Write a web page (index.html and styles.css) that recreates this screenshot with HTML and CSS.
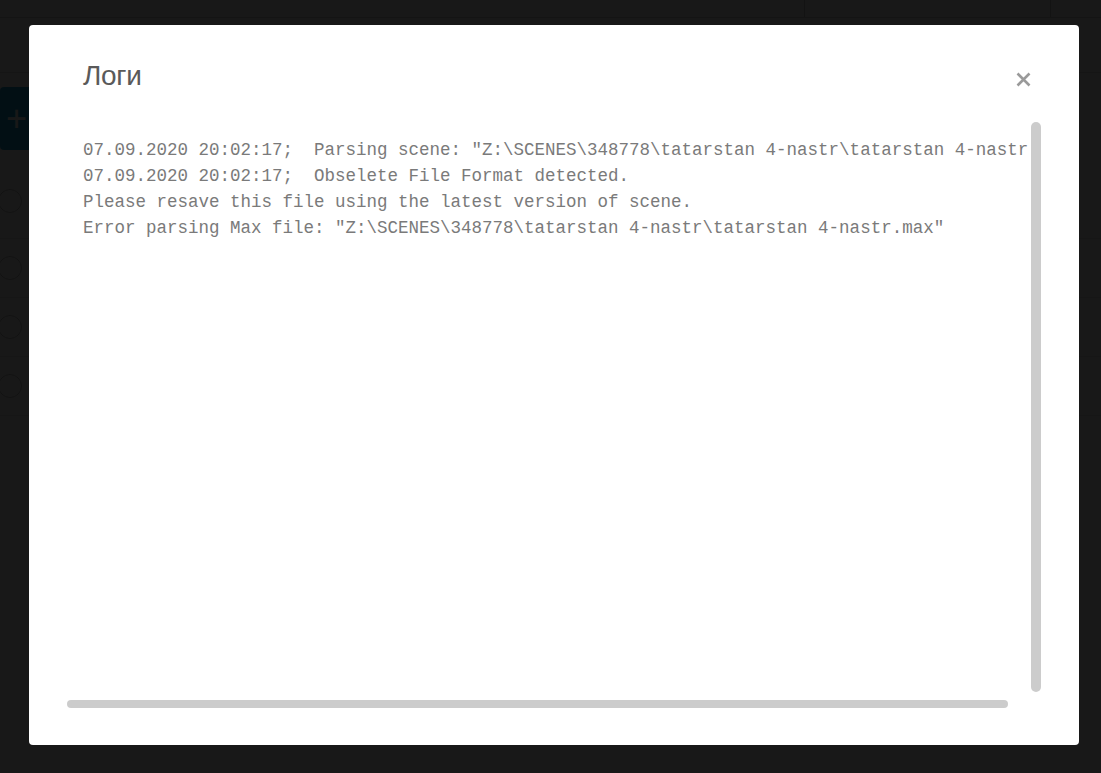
FILE: index.html
```html
<!DOCTYPE html>
<html lang="ru">
<head>
<meta charset="utf-8">
<title>Логи</title>
<link rel="stylesheet" href="styles.css">
</head>
<body>
<div class="page">
  <div class="topbar">
    <div class="tb-fill"></div>
    <div class="tb-cell"></div>
    <div class="tb-end"></div>
  </div>
  <div class="toolbar"></div>
  <div class="content">
    <div class="add-wrap"><button class="add">+</button></div>
    <ul class="rows">
      <li class="row row-first"><span class="circle"></span></li>
      <li class="row"><span class="circle"></span></li>
      <li class="row"><span class="circle"></span></li>
      <li class="row"><span class="circle"></span></li>
    </ul>
  </div>
</div>

<div class="overlay">
  <div class="modal">
    <div class="modal-head">
      <h2 class="modal-title">Логи</h2>
      <button class="close" aria-label="close">
        <svg width="15" height="15" viewBox="0 0 15 15"><path d="M1.5 1.5 L13.5 13.5 M13.5 1.5 L1.5 13.5" stroke="#9a9a9a" stroke-width="2.6" stroke-linecap="butt" fill="none"/></svg>
      </button>
    </div>
    <div class="log">
<pre class="log-text">07.09.2020 20:02:17;  Parsing scene: "Z:\SCENES\348778\tatarstan 4-nastr\tatarstan 4-nastr.max"
07.09.2020 20:02:17;  Obselete File Format detected.
Please resave this file using the latest version of scene.
Error parsing Max file: "Z:\SCENES\348778\tatarstan 4-nastr\tatarstan 4-nastr.max"</pre>
      <div class="sb-v"></div>
      <div class="sb-h"></div>
    </div>
  </div>
</div>
</body>
</html>
```

FILE: styles.css
```css
html, body {
  margin: 0;
  padding: 0;
  height: 100%;
}
body {
  background: #ffffff;
  font-family: "Liberation Sans", Arial, sans-serif;
  overflow: hidden;
}

/* background page */
.page {
  width: 1101px;
  height: 773px;
}
.topbar {
  display: flex;
  height: 17px;
  border-bottom: 1px solid #d4d4d4;
  background: #f8f8f8;
}
.tb-fill { width: 804px; }
.tb-cell {
  width: 245px;
  border-left: 1px solid #c8c8c8;
  border-right: 1px solid #c8c8c8;
}
.tb-end { flex: 1; }
.toolbar {
  height: 54px;
  border-bottom: 1px solid #e0e0e0;
}
.content {
  display: flex;
  flex-direction: column;
}
.add-wrap {
  padding-top: 14px;
}
.add {
  width: 200px;
  height: 63px;
  border: 0;
  border-radius: 4px;
  background: #1e9ed0;
  color: #ffffff;
  font: 36px/63px "Liberation Sans", Arial, sans-serif;
  text-align: left;
  padding: 0 0 0 6px;
}
.rows {
  list-style: none;
  margin: 0;
  padding: 0;
}
.row {
  height: 58px;
  border-bottom: 1px solid #e4e4e4;
  display: flex;
  align-items: center;
}
.row-first {
  height: 88px;
  align-items: flex-end;
}
.row-first .circle {
  margin-bottom: 25px;
}
.circle {
  width: 22px;
  height: 22px;
  border: 1px solid #bdbdbd;
  border-radius: 50%;
  margin-left: -2px;
}

/* overlay + modal */
.overlay {
  position: fixed;
  inset: 0;
  background: rgba(0, 0, 0, 0.905);
  display: flex;
  align-items: flex-start;
  padding: 25px 0 0 29px;
  box-sizing: border-box;
}
.modal {
  width: 1050px;
  height: 720px;
  background: #ffffff;
  border-radius: 4px;
  box-sizing: border-box;
  padding: 35px 37px 36px 38px;
  display: flex;
  flex-direction: column;
}
.modal-head {
  display: flex;
  align-items: center;
  justify-content: space-between;
  height: 32px;
  padding: 0 11px 0 16px;
}
.modal-title {
  margin: 0;
  font-family: "Liberation Sans", Arial, sans-serif;
  font-size: 28px;
  line-height: 32px;
  font-weight: 400;
  color: #5a5a5a;
  letter-spacing: -0.3px;
}
.close {
  border: 0;
  background: transparent;
  padding: 0;
  margin-top: 7px;
  width: 15px;
  height: 15px;
  display: block;
}
.close svg { display: block; }

.log {
  position: relative;
  margin-top: 29px;
  flex: 1;
  overflow: hidden;
}
.log-text {
  margin: 0;
  width: 964px;
  box-sizing: border-box;
  padding: 16px 0 0 16px;
  font-family: "Liberation Mono", "Courier New", monospace;
  font-size: 17.5px;
  line-height: 26px;
  color: #7a7a7a;
  white-space: pre;
  overflow: hidden;
}
.sb-v {
  position: absolute;
  right: 1px;
  top: 1px;
  width: 10px;
  height: 570px;
  background: #cccccc;
  border-radius: 5px;
}
.sb-h {
  position: absolute;
  left: 0;
  bottom: 1px;
  width: 941px;
  height: 8px;
  background: #cccccc;
  border-radius: 4px;
}
```
